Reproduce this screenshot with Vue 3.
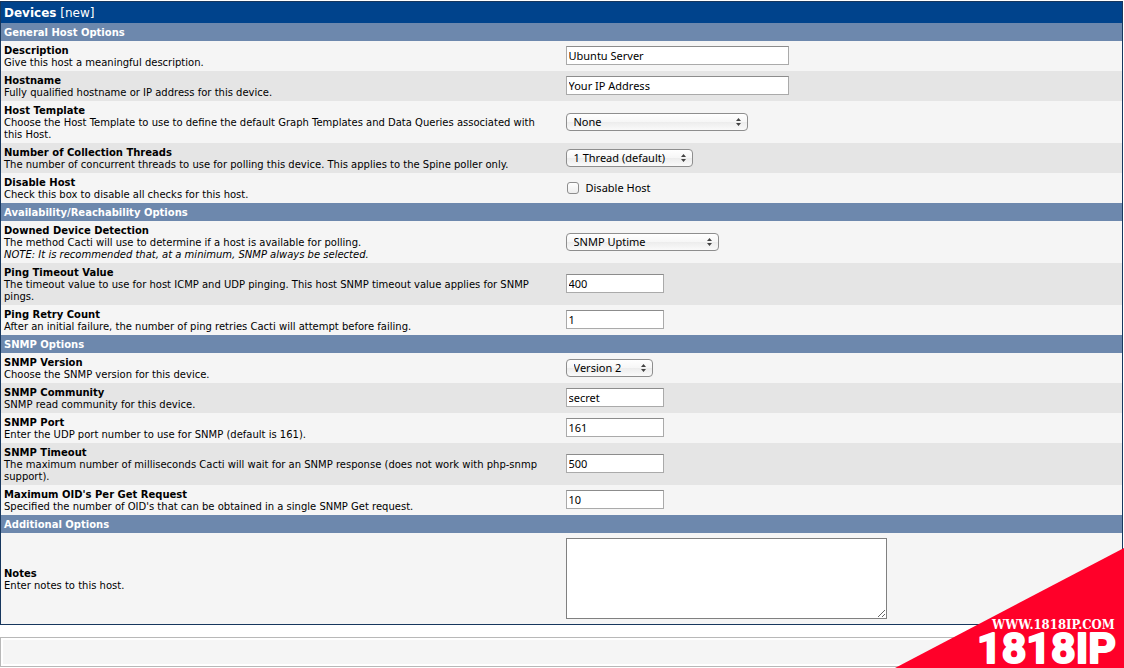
<script setup>
import { reactive } from 'vue'

const sections = reactive([
  {
    title: 'General Host Options',
    fields: [
      { id: 'description', label: 'Description', help: 'Give this host a meaningful description.', type: 'text', size: 'wide', value: 'Ubuntu Server' },
      { id: 'hostname', label: 'Hostname', help: 'Fully qualified hostname or IP address for this device.', type: 'text', size: 'wide', value: 'Your IP Address' },
      { id: 'template', label: 'Host Template', help: 'Choose the Host Template to use to define the default Graph Templates and Data Queries associated with this Host.', type: 'select', size: 'large', value: 'None' },
      { id: 'threads', label: 'Number of Collection Threads', help: 'The number of concurrent threads to use for polling this device. This applies to the Spine poller only.', type: 'select', size: 'small', value: '1 Thread (default)' },
      { id: 'disabled', label: 'Disable Host', help: 'Check this box to disable all checks for this host.', type: 'checkbox', caption: 'Disable Host', value: false }
    ]
  },
  {
    title: 'Availability/Reachability Options',
    fields: [
      { id: 'detection', label: 'Downed Device Detection', help: 'The method Cacti will use to determine if a host is available for polling.', note: 'NOTE: It is recommended that, at a minimum, SNMP always be selected.', type: 'select', size: 'medium', value: 'SNMP Uptime' },
      { id: 'ping-timeout', label: 'Ping Timeout Value', help: 'The timeout value to use for host ICMP and UDP pinging. This host SNMP timeout value applies for SNMP pings.', type: 'text', size: 'narrow', value: '400' },
      { id: 'ping-retries', label: 'Ping Retry Count', help: 'After an initial failure, the number of ping retries Cacti will attempt before failing.', type: 'text', size: 'narrow', value: '1' }
    ]
  },
  {
    title: 'SNMP Options',
    fields: [
      { id: 'snmp-version', label: 'SNMP Version', help: 'Choose the SNMP version for this device.', type: 'select', size: 'tiny', value: 'Version 2' },
      { id: 'snmp-community', label: 'SNMP Community', help: 'SNMP read community for this device.', type: 'text', size: 'narrow', value: 'secret' },
      { id: 'snmp-port', label: 'SNMP Port', help: 'Enter the UDP port number to use for SNMP (default is 161).', type: 'text', size: 'narrow', value: '161' },
      { id: 'snmp-timeout', label: 'SNMP Timeout', help: 'The maximum number of milliseconds Cacti will wait for an SNMP response (does not work with php-snmp support).', type: 'text', size: 'narrow', value: '500' },
      { id: 'max-oids', label: "Maximum OID's Per Get Request", help: "Specified the number of OID's that can be obtained in a single SNMP Get request.", type: 'text', size: 'narrow', value: '10' }
    ]
  },
  {
    title: 'Additional Options',
    fields: [
      { id: 'notes', label: 'Notes', help: 'Enter notes to this host.', type: 'textarea', value: '' }
    ]
  }
])
</script>

<template>
  <div class="page">
    <form class="panel" @submit.prevent>
      <h1 class="title"><strong>Devices</strong> [new]</h1>
      <section v-for="section in sections" :key="section.title">
        <h2 class="section-title">{{ section.title }}</h2>
        <div v-for="field in section.fields" :key="field.id" class="row">
          <div class="info">
            <label class="name" :for="field.id">{{ field.label }}</label>
            <p class="help">{{ field.help }}</p>
            <p v-if="field.note" class="help note">{{ field.note }}</p>
          </div>
          <div class="control">
            <input v-if="field.type === 'text'" :id="field.id" v-model="field.value" type="text" class="text" :class="field.size">
            <span v-else-if="field.type === 'select'" class="picker" :class="field.size">
              <select :id="field.id" v-model="field.value">
                <option>{{ field.value }}</option>
              </select>
              <svg class="arrows" viewBox="0 0 5 8" aria-hidden="true">
                <path d="M2.5 0 5 3H0zM0 5h5L2.5 8z" fill="#444" />
              </svg>
            </span>
            <label v-else-if="field.type === 'checkbox'" class="check">
              <input :id="field.id" v-model="field.value" type="checkbox">
              {{ field.caption }}
            </label>
            <textarea v-else :id="field.id" v-model="field.value" class="notes"></textarea>
          </div>
        </div>
      </section>
    </form>
    <div class="actions"><div class="actions-inner"></div></div>
    <svg class="badge" viewBox="0 0 229 120" role="img" aria-label="1818IP">
      <path d="M0 120 229 0v120z" fill="#ff0029" />
      <text class="badge-url" x="97" y="81">WWW.1818IP.COM</text>
      <text class="badge-name" x="82" y="115">1818IP</text>
    </svg>
  </div>
</template>

<style>
body {
  margin: 0;
  background: #fff;
}
</style>

<style scoped>
.page {
  position: relative;
  box-sizing: border-box;
  min-height: 100vh;
  padding: 1px 1px 1px 0;
  font: 10px/12px Verdana, "DejaVu Sans", sans-serif;
  color: #000;
}
.panel {
  border: 1px solid #17375e;
  background: #f5f5f5;
}
.title {
  margin: 0;
  padding: 4px 3px 2px;
  background: #00438c;
  color: #fff;
  font-size: 12px;
  line-height: 15px;
  font-weight: normal;
}
.section-title {
  margin: 0;
  padding: 4px 3px 2px;
  background: #6d88ad;
  color: #fff;
  font-size: 10px;
  line-height: 12px;
  font-weight: bold;
}
.row {
  display: grid;
  grid-template-columns: 1fr 1fr;
  align-items: center;
  background: #f5f5f5;
}
.row:nth-of-type(even) {
  background: #e5e5e5;
}
.info {
  padding: 4px 12px 2px 3px;
}
.name {
  display: block;
  font-weight: bold;
}
.help {
  margin: 0;
}
.note {
  font-style: italic;
}
.control {
  display: flex;
  padding-left: 4px;
  font: 11px/14px "Lucida Grande", "Noto Sans", sans-serif;
}
.text,
.notes,
select {
  box-sizing: border-box;
  margin: 0;
  font: inherit;
  color: #000;
}
.text {
  height: 19px;
  margin-bottom: 1px;
  padding: 1px 2px;
  border: 1px solid #aaa;
  border-top-color: #8c8c8c;
  background: #fff;
}
.wide { width: 223px; }
.narrow { width: 98px; }
.large { width: 182px; }
.medium { width: 153px; }
.small { width: 127px; }
.tiny { width: 87px; }
.picker {
  position: relative;
}
select {
  display: block;
  width: 100%;
  height: 18px;
  padding: 0 16px 0 7px;
  appearance: none;
  border: 1px solid #8e8e8e;
  border-radius: 4px;
  background: linear-gradient(#fff, #f6f6f6 50%, #ececec 50%, #fafafa);
}
.arrows {
  position: absolute;
  top: 5px;
  right: 7px;
  width: 5px;
  height: 8px;
  pointer-events: none;
}
.check {
  display: flex;
  align-items: center;
  gap: 7px;
  padding-left: 1px;
}
.check input {
  width: 12px;
  height: 12px;
  margin: 0;
  appearance: none;
  border: 1px solid #8e8e8e;
  border-radius: 3px;
  background: linear-gradient(#fff, #eee);
}
.check input:checked {
  background: #4a78b5;
}
.notes {
  display: block;
  width: 321px;
  height: 81px;
  margin: 5px 0;
  padding: 2px;
  border: 1px solid #808080;
  background: #fff;
}
.actions {
  margin-top: 12px;
  padding: 2px;
  border: 1px solid #b8b8b8;
}
.actions-inner {
  height: 24px;
  background: #f5f5f5;
}
.badge {
  position: absolute;
  right: 0;
  bottom: 0;
  width: 229px;
  height: 120px;
}
.badge text {
  fill: #fff;
}
.badge-url {
  font: bold 13px "DejaVu Serif Condensed", "DejaVu Serif", serif;
}
.badge-name {
  font: 700 43px Roboto, sans-serif;
  stroke: #fff;
  stroke-width: 2;
  stroke-linejoin: round;
}
</style>
